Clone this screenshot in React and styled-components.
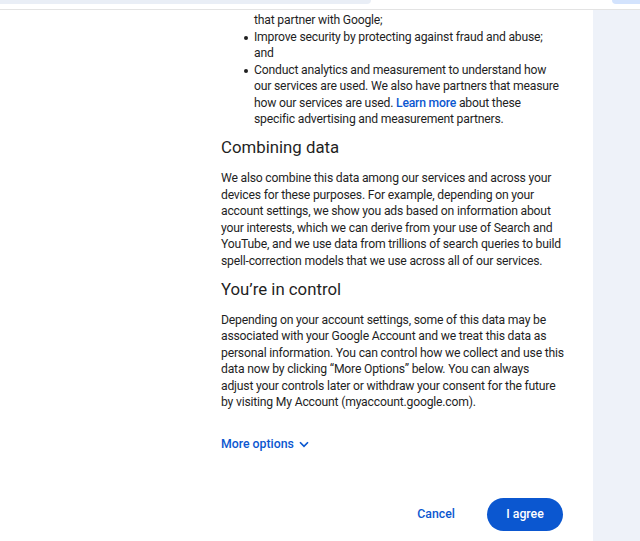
import React from 'react';
import styled, { createGlobalStyle } from 'styled-components';

const GlobalStyle = createGlobalStyle`
  html, body {
    margin: 0;
    padding: 0;
    background: #ffffff;
  }
  body {
    font-family: Roboto, "Liberation Sans", Arial, sans-serif;
    color: #1f1f1f;
    overflow: hidden;
  }
`;

const Frame = styled.div`
  width: 640px;
  height: 541px;
  display: flex;
  flex-direction: column;
  overflow: hidden;
`;

const TopBar = styled.div`
  height: 9px;
  flex-shrink: 0;
  display: flex;
  justify-content: space-between;
  align-items: flex-start;
  border-bottom: 1px solid #e3e3e3;
`;

const Pill = styled.div`
  height: 4px;
  width: ${(p) => p.width}px;
  background: ${(p) => p.color};
  border-radius: ${(p) => (p.side === 'left' ? '0 0 14px 0' : '0 0 0 14px')};
`;

const Body = styled.div`
  flex: 1;
  display: flex;
  min-height: 0;
`;

const Page = styled.main`
  flex: 1;
  padding: 2px 0 0 221px;
`;

const Column = styled.div`
  width: 342px;
`;

const Side = styled.aside`
  width: 47px;
  flex-shrink: 0;
  background: #eef2f9;
`;

const List = styled.ul`
  margin: 0;
  padding: 0 0 0 33px;
  font-size: 12.2px;
  letter-spacing: -0.2px;
  line-height: 16.5px;
  list-style: none;
  white-space: nowrap;
`;

const Item = styled.li`
  position: relative;

  &::before {
    content: '';
    display: ${(p) => (p.bare ? 'none' : 'block')};
    position: absolute;
    left: -10px;
    top: 7px;
    width: 4px;
    height: 4px;
    border-radius: 50%;
    background: #1f1f1f;
  }
`;

const Heading = styled.h2`
  margin: 8.5px 0 12px;
  font-size: 16.8px;
  line-height: 22px;
  font-weight: 400;
  color: #1f1f1f;
`;

const Para = styled.p`
  margin: 0;
  font-size: 12.2px;
  letter-spacing: -0.2px;
  line-height: 16.5px;
  white-space: nowrap;
`;

const Link = styled.a`
  color: #0b57d0;
  text-decoration: none;
  font-weight: 500;
`;

const MoreOptions = styled.button`
  margin-top: 25.5px;
  padding: 0;
  border: 0;
  background: none;
  display: flex;
  align-items: center;
  gap: 4px;
  font-family: inherit;
  font-size: 12.3px;
  line-height: 16.5px;
  font-weight: 500;
  color: #0b57d0;
`;

const Actions = styled.div`
  margin-top: 45px;
  display: flex;
  justify-content: flex-end;
  align-items: center;
  gap: 16px;
`;

const TextButton = styled.button`
  height: 33px;
  padding: 0 16px;
  border: 0;
  background: none;
  font-family: inherit;
  font-size: 12.3px;
  font-weight: 500;
  color: #0b57d0;
`;

const FilledButton = styled.button`
  height: 33px;
  width: 76px;
  border: 0;
  border-radius: 17px;
  background: #0b57d0;
  font-family: inherit;
  font-size: 12.3px;
  font-weight: 500;
  color: #ffffff;
`;

const Chevron = () => (
  <svg width="12" height="12" viewBox="0 0 24 24" aria-hidden="true">
    <path d="M4 8.5l8 8 8-8" fill="none" stroke="#0b57d0" strokeWidth="3.4" />
  </svg>
);

export default function App() {
  return (
    <>
      <GlobalStyle />
      <Frame>
        <TopBar>
          <Pill side="left" width={371} color="#e9eef6" />
          <Pill side="right" width={28} color="#d3e3fd" />
        </TopBar>
        <Body>
          <Page>
            <Column>
              <List>
                <Item bare>that partner with Google;</Item>
                <Item>
                  Improve security by protecting against fraud and abuse;
                  <br />
                  and
                </Item>
                <Item>
                  Conduct analytics and measurement to understand how
                  <br />
                  our services are used. We also have partners that measure
                  <br />
                  how our services are used. <Link href="#">Learn more</Link> about these
                  <br />
                  specific advertising and measurement partners.
                </Item>
              </List>

              <Heading>Combining data</Heading>
              <Para>
                We also combine this data among our services and across your
                <br />
                devices for these purposes. For example, depending on your
                <br />
                account settings, we show you ads based on information about
                <br />
                your interests, which we can derive from your use of Search and
                <br />
                YouTube, and we use data from trillions of search queries to build
                <br />
                spell-correction models that we use across all of our services.
              </Para>

              <Heading>You’re in control</Heading>
              <Para>
                Depending on your account settings, some of this data may be
                <br />
                associated with your Google Account and we treat this data as
                <br />
                personal information. You can control how we collect and use this
                <br />
                data now by clicking “More Options” below. You can always
                <br />
                adjust your controls later or withdraw your consent for the future
                <br />
                by visiting My Account (myaccount.google.com).
              </Para>

              <MoreOptions>
                More options <Chevron />
              </MoreOptions>

              <Actions>
                <TextButton>Cancel</TextButton>
                <FilledButton>I agree</FilledButton>
              </Actions>
            </Column>
          </Page>
          <Side />
        </Body>
      </Frame>
    </>
  );
}
